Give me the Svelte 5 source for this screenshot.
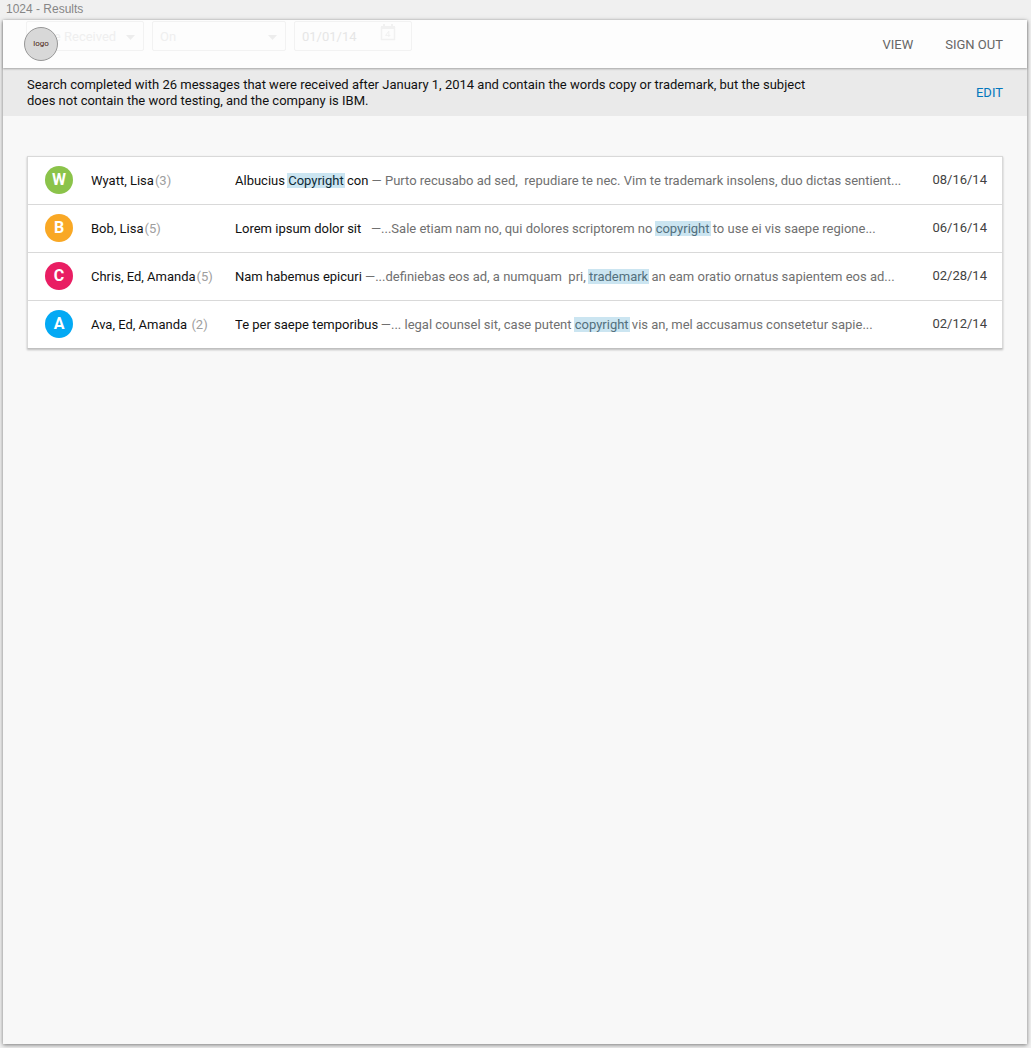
<script>
  const filters = [
    { id: 'field', label: 'Filter field', value: 'Date Received', size: 'narrow' },
    { id: 'operator', label: 'Filter operator', value: 'On', size: 'wide' }
  ]

  const messages = [
    {
      initial: 'W',
      color: '#8bc34a',
      people: 'Wyatt, Lisa',
      count: 3,
      date: '08/16/14',
      subject: [{ text: 'Albucius ' }, { text: 'Copyright', hit: true }, { text: ' con' }],
      snippet: [{ text: ' — Purto recusabo ad sed,  repudiare te nec. Vim te trademark insolens, duo dictas sentient...' }]
    },
    {
      initial: 'B',
      color: '#f9a825',
      people: 'Bob, Lisa',
      count: 5,
      date: '06/16/14',
      subject: [{ text: 'Lorem ipsum dolor sit' }],
      snippet: [
        { text: '   —...Sale etiam nam no, qui dolores scriptorem no ' },
        { text: 'copyright', hit: true },
        { text: ' to use ei vis saepe regione...' }
      ]
    },
    {
      initial: 'C',
      color: '#e91e63',
      people: 'Chris, Ed, Amanda',
      count: 5,
      date: '02/28/14',
      subject: [{ text: 'Nam habemus epicuri' }],
      snippet: [
        { text: ' —...definiebas eos ad, a numquam  pri, ' },
        { text: 'trademark', hit: true },
        { text: ' an eam oratio ornatus sapientem eos ad...' }
      ]
    },
    {
      initial: 'A',
      color: '#03a9f4',
      people: 'Ava, Ed, Amanda ',
      count: 2,
      date: '02/12/14',
      subject: [{ text: 'Te per saepe temporibus' }],
      snippet: [
        { text: '\u2009—... legal counsel sit, case putent ' },
        { text: 'copyright', hit: true },
        { text: ' vis an, mel accusamus consetetur sapie...' }
      ]
    }
  ]

  let date = $state('01/01/14')
</script>

{#snippet parts(list)}
  {#each list as part}{#if part.hit}<mark>{part.text}</mark>{:else}{part.text}{/if}{/each}
{/snippet}

<div class="page">
  <div class="caption">1024 - Results</div>

  <div class="board">
    <header class="topbar">
      <!-- filter row showing faintly through the bar -->
      <div class="filters">
        {#each filters as filter}
          <div class="field {filter.size}">
            <select id={filter.id} aria-label={filter.label}>
              <option>{filter.value}</option>
            </select>
            <svg class="caret" width="9" height="5" viewBox="0 0 9 5" aria-hidden="true">
              <path d="M0 0h9L4.5 5z" />
            </svg>
          </div>
        {/each}
        <div class="field date">
          <input type="text" aria-label="Filter date" bind:value={date} />
          <svg class="calendar" width="16" height="17" viewBox="0 0 16 17" aria-hidden="true">
            <path d="M1.5 3.5h13v12h-13z" fill="none" stroke="currentColor" stroke-width="1.4" />
            <path d="M1 2h14v3H1zM3 0h2v3H3zM11 0h2v3h-2z" fill="currentColor" />
            <path d="M8.8 13V7.2L5.6 11.4h4.8" fill="none" stroke="currentColor" stroke-width="1" />
          </svg>
        </div>
      </div>

      <a class="logo" href="#home">logo</a>
      <nav>
        <a href="#view">VIEW</a>
        <a href="#signout">SIGN OUT</a>
      </nav>
    </header>

    <section class="summary">
      <p>
        Search completed with 26 messages that were received after January 1, 2014 and contain the
        words copy or trademark, but the subject does not contain the word testing, and the company
        is IBM.
      </p>
      <button type="button">EDIT</button>
    </section>

    <ul class="messages">
      {#each messages as message}
        <li>
          <span class="avatar" style="background: {message.color}">{message.initial}</span>
          <span class="people">{message.people}<span class="count">({message.count})</span></span>
          <span class="text"><span class="subject">{@render parts(message.subject)}</span><span class="snippet">{@render parts(message.snippet)}</span></span>
          <time>{message.date}</time>
        </li>
      {/each}
    </ul>
  </div>
</div>

<style>
  :global(body) {
    margin: 0;
    background: #f0f0f0;
  }

  .page {
    display: flex;
    flex-direction: column;
    box-sizing: border-box;
    min-height: 100vh;
    padding: 0 4px 4px 3px;
    font-family: Roboto, 'Liberation Sans', sans-serif;
    font-size: 13px;
    line-height: 16px;
    color: #111;
  }

  .caption {
    height: 20px;
    padding-left: 3px;
    font-family: 'Liberation Sans', Arial, sans-serif;
    font-size: 12px;
    line-height: 18px;
    color: #868686;
  }

  .board {
    flex: 1;
    background: #f8f8f8;
    box-shadow: 0 1px 4px rgba(0, 0, 0, 0.5);
  }

  .topbar {
    position: relative;
    display: flex;
    align-items: center;
    justify-content: space-between;
    height: 48px;
    padding: 0 24px 0 21px;
    background: #fdfdfd;
    box-shadow: 0 1px 2px rgba(0, 0, 0, 0.3);
  }

  .filters {
    position: absolute;
    top: 1px;
    left: 23px;
    display: flex;
    gap: 8px;
  }

  .field {
    position: relative;
    color: #efefef;
  }

  .field select,
  .field input {
    appearance: none;
    box-sizing: border-box;
    width: 100%;
    height: 30px;
    padding: 0 7px;
    border: 1px solid #f2f2f2;
    border-radius: 2px;
    background: transparent;
    font: inherit;
    color: inherit;
  }

  .field select {
    padding-top: 2px;
  }

  .narrow {
    width: 118px;
  }

  .wide {
    width: 134px;
  }

  .date {
    width: 118px;
    color: #e6e6e6;
  }

  .caret,
  .calendar {
    position: absolute;
    pointer-events: none;
  }

  .caret {
    top: 14px;
    right: 9px;
    fill: #ededed;
  }

  .calendar {
    top: 3px;
    right: 16px;
    color: #f1f1f1;
  }

  .logo {
    position: relative;
    box-sizing: border-box;
    width: 34px;
    height: 34px;
    border: 1px solid #979797;
    border-radius: 50%;
    background: #d8d8d8;
    font-size: 8px;
    line-height: 32px;
    text-align: center;
    text-decoration: none;
    color: #4a1c10;
  }

  nav {
    display: flex;
    gap: 32px;
    padding-top: 2px;
  }

  nav a {
    text-decoration: none;
    color: #666;
  }

  .summary {
    display: flex;
    align-items: center;
    justify-content: space-between;
    padding: 9px 24px 7px;
    background: #eaeaea;
  }

  .summary p {
    max-width: 800px;
    margin: 0;
  }

  .summary button {
    padding: 0;
    border: 0;
    background: none;
    font: inherit;
    color: #0277bd;
    cursor: pointer;
  }

  .messages {
    margin: 40px 24px;
    padding: 0;
    list-style: none;
    background: #fff;
    border: 1px solid #d9d9d9;
    border-bottom-color: #c0c0c0;
    box-shadow: 0 1px 2px rgba(0, 0, 0, 0.25);
  }

  li {
    display: flex;
    align-items: center;
    height: 46px;
    padding: 0 15px 1px 17px;
  }

  li + li {
    border-top: 1px solid #d9d9d9;
  }

  .avatar {
    flex: none;
    width: 28px;
    height: 28px;
    margin-right: 18px;
    border-radius: 50%;
    font-size: 16px;
    font-weight: 700;
    line-height: 28px;
    text-align: center;
    color: #fff;
  }

  .people,
  .text {
    padding-top: 2px;
    white-space: pre;
  }

  .people {
    flex: none;
    width: 144px;
  }

  .count {
    margin-left: 1px;
    color: #9e9e9e;
  }

  .text {
    flex: 1;
    min-width: 0;
    overflow: hidden;
  }

  .snippet {
    color: #707070;
  }

  mark {
    margin: 0 -1px;
    padding: 0 1px;
    background: #cbe5f1;
    color: inherit;
  }

  .subject mark {
    color: #0f2a36;
  }

  .snippet mark {
    color: #53707d;
  }

  time {
    margin-left: 16px;
    color: #424242;
  }
</style>
